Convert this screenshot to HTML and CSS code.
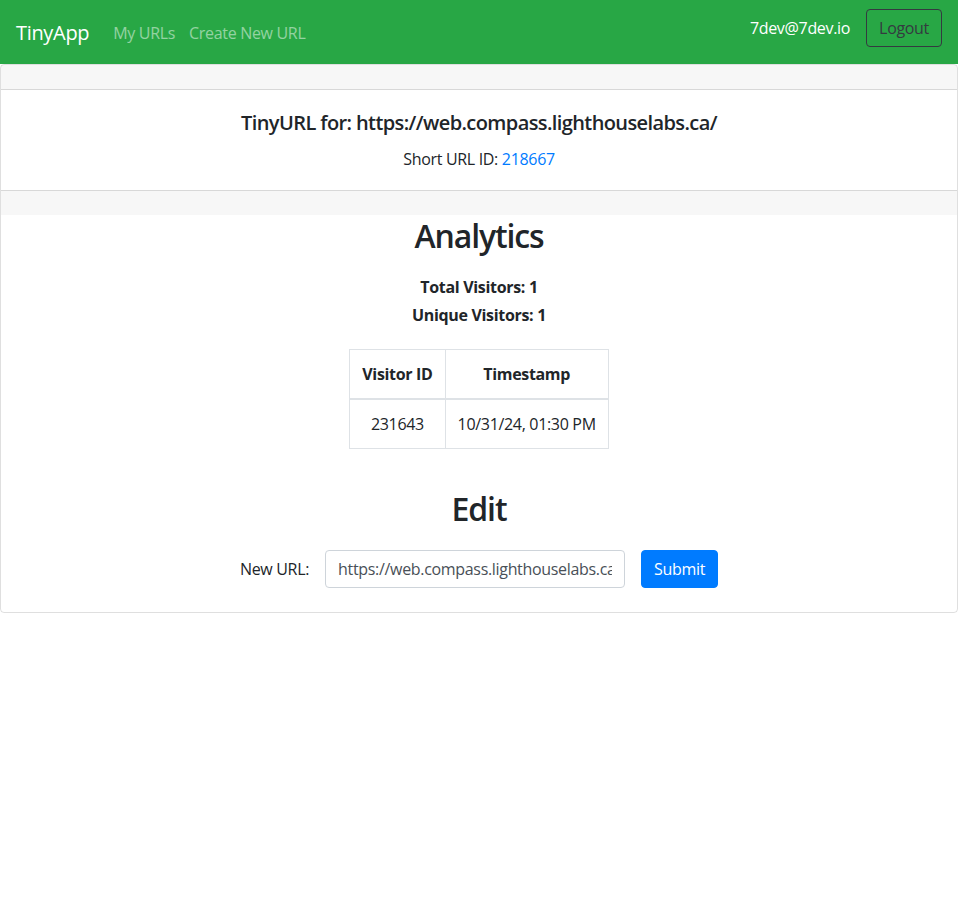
FILE: index.html
```html
<!DOCTYPE html>
<html lang="en">
<head>
<meta charset="utf-8">
<title>TinyApp</title>
<link rel="stylesheet" href="styles.css">
</head>
<body>
<nav class="navbar">
  <div class="nav-left">
    <a class="brand" href="#">TinyApp</a>
    <a class="nav-link" href="#">My URLs</a>
    <a class="nav-link" href="#">Create New URL</a>
  </div>
  <div class="nav-right">
    <span class="user">7dev@7dev.io</span>
    <button class="btn-logout" type="button">Logout</button>
  </div>
</nav>
<main class="card">
  <div class="card-header"></div>
  <div class="card-body">
    <h5 class="title">TinyURL for: https://web.compass.lighthouselabs.ca/</h5>
    <p class="short">Short URL ID: <a href="#">218667</a></p>
  </div>
  <div class="card-footer"></div>
  <section class="analytics">
    <h2 class="section-title">Analytics</h2>
    <p class="stat">Total Visitors: 1</p>
    <p class="stat">Unique Visitors: 1</p>
    <table class="visits">
      <thead>
        <tr><th>Visitor ID</th><th>Timestamp</th></tr>
      </thead>
      <tbody>
        <tr><td>231643</td><td>10/31/24, 01:30 PM</td></tr>
      </tbody>
    </table>
    <h2 class="section-title edit-title">Edit</h2>
    <form class="edit-form">
      <label class="label" for="newurl">New URL:</label>
      <input class="input" id="newurl" type="text" value="https://web.compass.lighthouselabs.ca/">
      <button class="btn-submit" type="button">Submit</button>
    </form>
  </section>
</main>
</body>
</html>
```
FILE: styles.css
```css
* { box-sizing: border-box; }
html, body { margin: 0; padding: 0; }
body {
  font-family: "Open Sans", "Noto Sans", sans-serif;
  font-size: 16px;
  line-height: 1.5;
  letter-spacing: -0.02em;
  color: #212529;
  background: #fff;
}
.navbar {
  height: 64px;
  background: #28a745;
  display: flex;
  align-items: center;
  justify-content: space-between;
  padding: 0 16px;
}
.nav-left { display: flex; align-items: center; padding-top: 2px; }
.brand { color: #fff; font-size: 20px; text-decoration: none; margin-right: 16px; }
.nav-link { color: rgba(255,255,255,.5); text-decoration: none; padding: 0 8px; }
.nav-link + .nav-link { padding-left: 6px; }
.nav-right { display: flex; align-items: center; gap: 16px; margin-top: -9px; }
.user { color: #fff; }
.btn-logout {
  font: inherit;
  letter-spacing: inherit;
  color: #343a40;
  background: transparent;
  border: 1px solid #343a40;
  border-radius: 4px;
  height: 38px;
  padding: 0 12px;
}
.card {
  border: 1px solid rgba(0,0,0,.125);
  border-radius: 4px;
  overflow: hidden;
}
.card-header {
  height: 25px;
  background: rgba(0,0,0,.03);
  border-bottom: 1px solid rgba(0,0,0,.125);
}
.card-body {
  height: 100px;
  padding: 20px;
  text-align: center;
}
.title {
  margin: 0 0 12px;
  padding-top: 1px;
  font-size: 20px;
  font-weight: 600;
  line-height: 1.2;
  letter-spacing: -0.03em;
}
.short { margin: 0; }
.short a { color: #007bff; text-decoration: none; }
.card-footer {
  height: 25px;
  background: rgba(0,0,0,.03);
  border-top: 1px solid rgba(0,0,0,.125);
}
.analytics {
  display: flex;
  flex-direction: column;
  align-items: center;
  padding-bottom: 24px;
}
.section-title {
  margin: 2px 0 0;
  font-size: 32px;
  font-weight: 600;
  line-height: 38px;
  letter-spacing: -0.035em;
}
.stat { margin: 0; font-weight: 700; line-height: 20px; }
.section-title + .stat { margin-top: 22px; }
.stat + .stat { margin-top: 8px; }
.visits {
  margin-top: 24px;
  border-collapse: collapse;
  text-align: center;
}
.visits th, .visits td {
  border: 1px solid #dee2e6;
  padding: 12px;
}
.visits th { height: 49px; border-bottom-width: 2px; font-weight: 700; }
.visits td { height: 48px; font-weight: 400; }
.edit-title { margin-top: 41px; }
.edit-form {
  margin-top: 22px;
  display: flex;
  align-items: center;
  gap: 16px;
}
.label { color: #212529; }
.input {
  width: 300px;
  height: 38px;
  font: inherit;
  letter-spacing: inherit;
  color: #495057;
  padding: 6px 12px;
  border: 1px solid #ced4da;
  border-radius: 4px;
}
.btn-submit {
  font: inherit;
  letter-spacing: inherit;
  color: #fff;
  background: #007bff;
  border: 1px solid #007bff;
  border-radius: 4px;
  height: 38px;
  padding: 0 12px;
}
```
